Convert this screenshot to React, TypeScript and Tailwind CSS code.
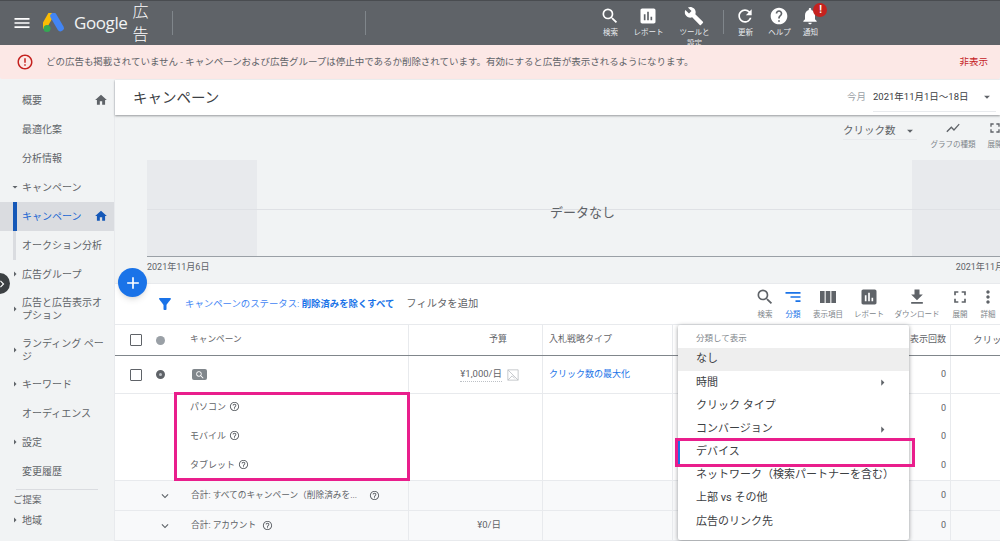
import type { ReactNode } from "react";
import {
  MdAdd,
  MdArrowDropDown,
  MdArrowRight,
  MdAssessment,
  MdBuild,
  MdChevronRight,
  MdErrorOutline,
  MdExpandMore,
  MdFileDownload,
  MdFilterAlt,
  MdFullscreen,
  MdHelp,
  MdHelpOutline,
  MdHome,
  MdMenu,
  MdMoreVert,
  MdNotifications,
  MdRefresh,
  MdSearch,
  MdShowChart,
  MdSort,
} from "react-icons/md";

function TopItem({ icon, label, width }: { icon: ReactNode; label: string; width: string }) {
  return (
    <div className={`flex flex-col items-center ${width}`}>
      <div className="relative h-[20px] text-white text-[20px]">{icon}</div>
      <div className="text-[7.5px] leading-[11px] mt-[1px] w-[32px] text-center text-[#e8eaed]">{label}</div>
    </div>
  );
}

function SideItem({
  label,
  caret,
  home,
  active,
  tall,
  sub,
}: {
  label: string;
  caret?: "down" | "right";
  home?: boolean;
  active?: boolean;
  tall?: string;
  sub?: boolean;
}) {
  return (
    <div className={`relative flex items-center pl-[22px] pr-[6px] ${tall ?? "h-[29px]"} ${active ? "bg-[#dadce0] text-[#1a67d2]" : "text-[#5f6368]"}`}>
      {active && <div className="absolute left-[13px] top-0 bottom-0 w-[4px] bg-[#1558b8]" />}
      {sub && <div className="absolute left-[13px] top-0 bottom-0 w-[3px] bg-[#dadce0]" />}
      {caret === "down" && <MdArrowDropDown className="absolute left-[9px] text-[12px]" />}
      {caret === "right" && <MdArrowRight className="absolute left-[9px] text-[12px]" />}
      <span className="flex-1 text-[10px] leading-[13px]">{label}</span>
      {home && <MdHome className={`text-[14px] ${active ? "text-[#1558b8]" : "text-[#5f6368]"}`} />}
    </div>
  );
}

function ToolItem({ icon, label, blue, width }: { icon: ReactNode; label: string; blue?: boolean; width: string }) {
  return (
    <div className={`flex flex-col items-center ${width} ${blue ? "text-[#1a73e8]" : "text-[#80868b]"}`}>
      <div className={`h-[20px] text-[20px] ${blue ? "text-[#1a73e8]" : "text-[#5f6368]"}`}>{icon}</div>
      <div className="text-[7.5px] leading-[10px] mt-[3px] whitespace-nowrap">{label}</div>
    </div>
  );
}

function Row({
  height,
  bg,
  first,
  budget,
  bid,
  right,
  border,
}: {
  height: string;
  bg?: string;
  first?: ReactNode;
  budget?: ReactNode;
  bid?: ReactNode;
  right?: ReactNode;
  border?: string;
}) {
  return (
    <div className={`grid grid-cols-[294px_134px_130px_278px_60px] ${height} ${bg ?? "bg-white"} border-b ${border ?? "border-[#e8eaed]"}`}>
      <div className="flex items-center border-r border-[#e8eaed] overflow-hidden">{first}</div>
      <div className="flex items-center justify-end border-r border-[#e8eaed] pr-[13px] text-[9px] text-[#5f6368]">{budget}</div>
      <div className="flex items-center pl-[6px] border-r border-[#e8eaed] text-[9px]">{bid}</div>
      <div className="flex items-center justify-end pr-[4px] border-r border-[#e8eaed] text-[9px] text-[#5f6368]">{right}</div>
      <div />
    </div>
  );
}

function Check() {
  return <div className="w-[12px] h-[12px] border border-[#5f6368] rounded-[1px] ml-[15px]" />;
}

function MenuItem({ label, arrow, selected, mark }: { label: string; arrow?: boolean; selected?: boolean; mark?: boolean }) {
  return (
    <div className={`relative flex items-center h-[23.2px] pl-[18px] pr-[19px] text-[11px] text-[#3c4043] ${selected ? "bg-[#eeeeee]" : ""}`}>
      {mark && <div className="absolute left-0 top-0 bottom-0 w-[2px] bg-[#1a73e8]" />}
      <span className="flex-1 whitespace-nowrap">{label}</span>
      {arrow && <MdArrowRight className="text-[15px] text-[#5f6368]" />}
    </div>
  );
}

export default function App() {
  return (
    <div className="relative w-[1000px] h-[541px] overflow-hidden bg-[#f1f3f4] font-['Roboto','Noto_Sans_CJK_JP',sans-serif]">
      {/* Top bar */}
      <div className="flex items-center h-[45px] overflow-hidden bg-[#5f6368] border-t border-[#494c50] text-white">
        <MdMenu className="text-[20px] ml-[12px]" />
        <svg viewBox="0 0 22 20" className="w-[22px] h-[20px] ml-[11px]">
          <path d="M8 1.5 L1.5 13" stroke="#fbbc04" strokeWidth="6" strokeLinecap="round" />
          <path d="M10.5 3 L17.5 15" stroke="#4285f4" strokeWidth="6.5" strokeLinecap="round" />
          <circle cx="4" cy="15.5" r="3.5" fill="#34a853" />
        </svg>
        <span className="ml-[9px] text-[17px] font-medium text-[#f1f3f4] font-['Open_Sans',sans-serif] tracking-[-0.4px]">Google</span>
        <span className="ml-[5px] w-[16px] text-[16px] leading-[23px] font-light">広告</span>
        <div className="w-px h-[24px] bg-[#80868b] ml-[24px]" />
        <div className="w-px h-[24px] bg-[#80868b] ml-[192px]" />
        <div className="flex items-start ml-[225px] pt-[5px] h-full">
          <TopItem width="w-[38px]" icon={<MdSearch />} label="検索" />
          <TopItem width="w-[38px]" icon={<MdAssessment />} label="レポート" />
          <TopItem width="w-[54px]" icon={<MdBuild />} label="ツールと設定" />
          <div className="w-px h-[24px] bg-[#80868b] mt-[4px] mx-[2px]" />
          <TopItem width="w-[38px]" icon={<MdRefresh />} label="更新" />
          <TopItem width="w-[30px]" icon={<MdHelp />} label="ヘルプ" />
          <div className="relative">
            <TopItem width="w-[32px]" icon={<MdNotifications />} label="通知" />
            <div className="absolute top-[-3px] right-[-1px] w-[14px] h-[14px] rounded-full bg-[#c5221f] text-white text-[10px] leading-[14px] font-bold text-center">!</div>
          </div>
        </div>
      </div>

      {/* Alert */}
      <div className="flex items-center h-[35px] bg-[#fce8e6] rounded-b-[3px] text-[9.5px] text-[#5f6368] border-b border-[#f1f3f4]">
        <MdErrorOutline className="text-[18px] text-[#c5221f] ml-[16px]" />
        <span className="ml-[12px] flex-1 whitespace-nowrap tracking-[-0.03px]">どの広告も掲載されていません - キャンペーンおよび広告グループは停止中であるか削除されています。有効にすると広告が表示されるようになります。</span>
        <span className="mr-[12px] text-[#c5221f]">非表示</span>
      </div>

      <div className="flex h-[461px]">
        {/* Sidebar */}
        <div className="w-[115px] shrink-0 pt-[5.5px] border-r border-[#e8eaed]">
          <SideItem label="概要" home />
          <SideItem label="最適化案" />
          <SideItem label="分析情報" />
          <SideItem label="キャンペーン" caret="down" />
          <SideItem label="キャンペーン" home active />
          <SideItem label="オークション分析" sub />
          <SideItem label="広告グループ" caret="right" />
          <SideItem label="広告と広告表示オプション" caret="right" tall="h-[41px]" />
          <SideItem label="ランディング ページ" caret="right" tall="h-[40px]" />
          <SideItem label="キーワード" caret="right" />
          <SideItem label="オーディエンス" />
          <SideItem label="設定" caret="right" />
          <SideItem label="変更履歴" />
          <div className="h-px bg-[#dadce0] mx-[16px] mt-[3px]" />
          <div className="text-[9.5px] text-[#5f6368] pl-[13px] mt-[3px] leading-[13px]">ご提案</div>
          <SideItem label="地域" caret="right" />
        </div>

        {/* Main */}
        <div className="flex-1 min-w-0">
          <div className="flex items-center h-[35px] bg-white shadow-[0_1px_2px_rgba(60,64,67,0.5)] relative">
            <span className="ml-[18px] mt-[2px] text-[14.5px] text-[#3c4043]">キャンペーン</span>
            <span className="ml-auto text-[9.5px] text-[#9aa0a6]">今月</span>
            <div className="ml-[7px] mr-[4px] w-[123px] h-[28px] flex items-center justify-between border-b border-[#e8eaed] text-[9.5px] text-[#3c4043] pr-[2px]">
              <span>2021年11月1日〜18日</span>
              <MdArrowDropDown className="text-[14px] text-[#5f6368]" />
            </div>
          </div>

          {/* Chart */}
          <div className="h-[168px] pl-[32px]">
            <div className="flex justify-end h-[45px] pt-[5px]">
              <div className="w-[74px] h-[17px] mt-[3px] flex items-center justify-between border-b border-[#e8eaed] text-[10.5px] text-[#5f6368] mr-[13px]">
                <span>クリック数</span>
                <MdArrowDropDown className="text-[14px]" />
              </div>
              <div className="flex flex-col items-center w-[46px] text-[#80868b]">
                <MdShowChart className="text-[16px] text-[#5f6368]" />
                <span className="text-[7.5px] whitespace-nowrap mt-[3px]">グラフの種類</span>
              </div>
              <div className="flex flex-col items-center w-[24px] mr-[-7px] text-[#80868b] ml-[7px]">
                <MdFullscreen className="text-[16px] text-[#5f6368]" />
                <span className="text-[7.5px] whitespace-nowrap mt-[3px]">展開</span>
              </div>
            </div>
            <div className="relative flex h-[97px] border-b border-[#9aa0a6]">
              <div className="w-[110px] bg-[#e8eaed]" />
              <div className="flex-1" />
              <div className="w-[88px] bg-[#e8eaed]" />
              <div className="absolute left-0 right-0 top-[49px] h-px bg-[#dfe1e5]" />
              <div className="absolute inset-0 flex items-center justify-center text-[13px] text-[#5f6368] pl-[18px] pt-[9px]">データなし</div>
            </div>
            <div className="flex justify-between text-[9px] text-[#5f6368] mt-[4px]">
              <span>2021年11月6日</span>
              <span className="whitespace-nowrap mr-[-4px]">2021年11月</span>
            </div>
          </div>

          {/* Table */}
          <div className="bg-white h-[258px] overflow-hidden">
            <div className="flex items-center h-[42px] border-b border-[#e8eaed] border-t">
              <MdFilterAlt className="text-[18px] text-[#1a73e8] ml-[41px]" />
              <span className="ml-[11px] text-[9.4px] text-[#4285f4] whitespace-nowrap">
                キャンペーンのステータス: <span className="font-bold text-[#1a73e8]">削除済みを除くすべて</span>
              </span>
              <span className="ml-[12px] text-[10.3px] text-[#5f6368] whitespace-nowrap">フィルタを追加</span>
              <div className="ml-auto flex mr-[-2px] mt-[-2px]">
                <ToolItem width="w-[30px]" icon={<MdSearch />} label="検索" />
                <ToolItem width="w-[26px]" icon={<MdSort className="-scale-x-100" />} label="分類" blue />
                <ToolItem
                  width="w-[44px]"
                  icon={
                    <svg viewBox="0 0 20 20" className="w-[20px] h-[20px]" fill="currentColor">
                      <rect x="2" y="4" width="4.6" height="12" />
                      <rect x="7.7" y="4" width="4.6" height="12" />
                      <rect x="13.4" y="4" width="4.6" height="12" />
                    </svg>
                  }
                  label="表示項目"
                />
                <ToolItem width="w-[38px]" icon={<MdAssessment />} label="レポート" />
                <ToolItem width="w-[58px]" icon={<MdFileDownload />} label="ダウンロード" />
                <ToolItem width="w-[28px]" icon={<MdFullscreen />} label="展開" />
                <ToolItem width="w-[28px]" icon={<MdMoreVert />} label="詳細" />
              </div>
            </div>

            <Row
              height="h-[31px]"
              border="border-[#80868b]"
              first={
                <>
                  <Check />
                  <div className="w-[9px] h-[9px] rounded-full bg-[#9aa0a6] ml-[14px]" />
                  <span className="ml-[25px] text-[8.7px] text-[#5f6368]">キャンペーン</span>
                </>
              }
              budget={<span className="pr-[22px]">予算</span>}
              bid={<span className="text-[#5f6368] text-[9px]">入札戦略タイプ</span>}
              right="表示回数"
            />
            <Row
              height="h-[38px]"
              first={
                <>
                  <Check />
                  <div className="w-[9px] h-[9px] rounded-full border-[3px] border-[#5f6368] bg-[#bdc1c6] ml-[14px]" />
                  <div className="ml-[27px] w-[15px] h-[11px] rounded-[2px] bg-[#80868b] flex items-center justify-center">
                    <MdSearch className="text-[10px] text-white" />
                  </div>
                </>
              }
              budget={
                <>
                  <span className="border-b border-dotted border-[#bdc1c6] text-[9.5px]">¥1,000/日</span>
                  <svg viewBox="0 0 14 14" className="w-[12px] h-[12px] ml-[5px] mr-[10px]" fill="none" stroke="#bdc1c6">
                    <path d="M1 1h12v12H1zM1 1l12 12M1 13l5-5 3 3" />
                  </svg>
                </>
              }
              bid={<span className="text-[#1a73e8] whitespace-nowrap">クリック数の最大化</span>}
              right="0"
            />
            <div className="h-[87px] border-b border-[#e8eaed] bg-white grid grid-cols-[294px_134px_130px_278px_60px] grid-rows-[86px]">
              <div className="border-r border-[#e8eaed] pl-[75px] text-[9px] text-[#5f6368] pt-[7px] min-h-0 overflow-hidden">
                <div className="h-[29px] flex items-start gap-[3px]">パソコン <MdHelpOutline className="text-[11px]" /></div>
                <div className="h-[29px] flex items-start gap-[3px]">モバイル <MdHelpOutline className="text-[11px]" /></div>
                <div className="h-[27px] flex items-start gap-[3px]">タブレット <MdHelpOutline className="text-[11px]" /></div>
              </div>
              <div className="border-r border-[#e8eaed]" />
              <div className="border-r border-[#e8eaed]" />
              <div className="border-r border-[#e8eaed] flex flex-col justify-around items-end pr-[4px] text-[9px] text-[#5f6368]">
                <span>0</span>
                <span>0</span>
                <span>0</span>
              </div>
            </div>
            <Row
              height="h-[30px]"
              bg="bg-[#f8f9fa]"
              first={
                <>
                  <MdExpandMore className="text-[14px] text-[#5f6368] ml-[43px]" />
                  <span className="ml-[19px] text-[8.7px] text-[#5f6368] whitespace-nowrap">合計: すべてのキャンペーン（削除済みを...</span>
                  <MdHelpOutline className="text-[11px] text-[#5f6368] ml-[12px]" />
                </>
              }
              right="0"
            />
            <Row
              height="h-[30px]"
              bg="bg-[#f8f9fa]"
              first={
                <>
                  <MdExpandMore className="text-[14px] text-[#5f6368] ml-[43px]" />
                  <span className="ml-[19px] text-[8.7px] text-[#5f6368] whitespace-nowrap">合計: アカウント</span>
                  <MdHelpOutline className="text-[11px] text-[#5f6368] ml-[6px]" />
                </>
              }
              budget={<span className="pr-[28px] text-[9.5px]">¥0/日</span>}
              right="0"
            />
          </div>
        </div>
      </div>

      {/* Clicks column head sits past the visible menu */}
      <div className="absolute left-[973px] top-[333px] text-[9.5px] text-[#5f6368] whitespace-nowrap">クリッ</div>

      {/* Floating add button */}
      <div className="absolute left-[118px] top-[268px] w-[29px] h-[29px] rounded-full bg-[#1a73e8] shadow-md flex items-center justify-center">
        <MdAdd className="text-[20px] text-white" />
      </div>
      {/* Sidebar collapse handle */}
      <div className="absolute left-[-11px] top-[273px] w-[21px] h-[21px] rounded-full bg-[#3c4043] flex items-center justify-end text-white pr-[1px]">
        <MdChevronRight className="text-[14px]" />
      </div>

      {/* Segment menu */}
      <div className="absolute left-[678px] top-[325px] w-[231px] h-[215px] bg-white shadow-[0_1px_4px_rgba(60,64,67,0.55)] rounded-[2px]">
        <div className="h-[23px] pl-[18px] pt-[8px] text-[8.5px] leading-[11px] text-[#80868b]">分類して表示</div>
        <MenuItem label="なし" selected />
        <MenuItem label="時間" arrow />
        <MenuItem label="クリック タイプ" />
        <MenuItem label="コンバージョン" arrow />
        <MenuItem label="デバイス" mark />
        <MenuItem label="ネットワーク（検索パートナーを含む）" />
        <MenuItem label="上部 vs その他" />
        <MenuItem label="広告のリンク先" />
      </div>

      {/* Pink highlight boxes */}
      <div className="absolute left-[174px] top-[392px] w-[236px] h-[89px] border-[3px] border-[#e91e8c]" />
      <div className="absolute left-[675px] top-[438px] w-[240px] h-[29px] border-[3px] border-[#e91e8c]" />
    </div>
  );
}
